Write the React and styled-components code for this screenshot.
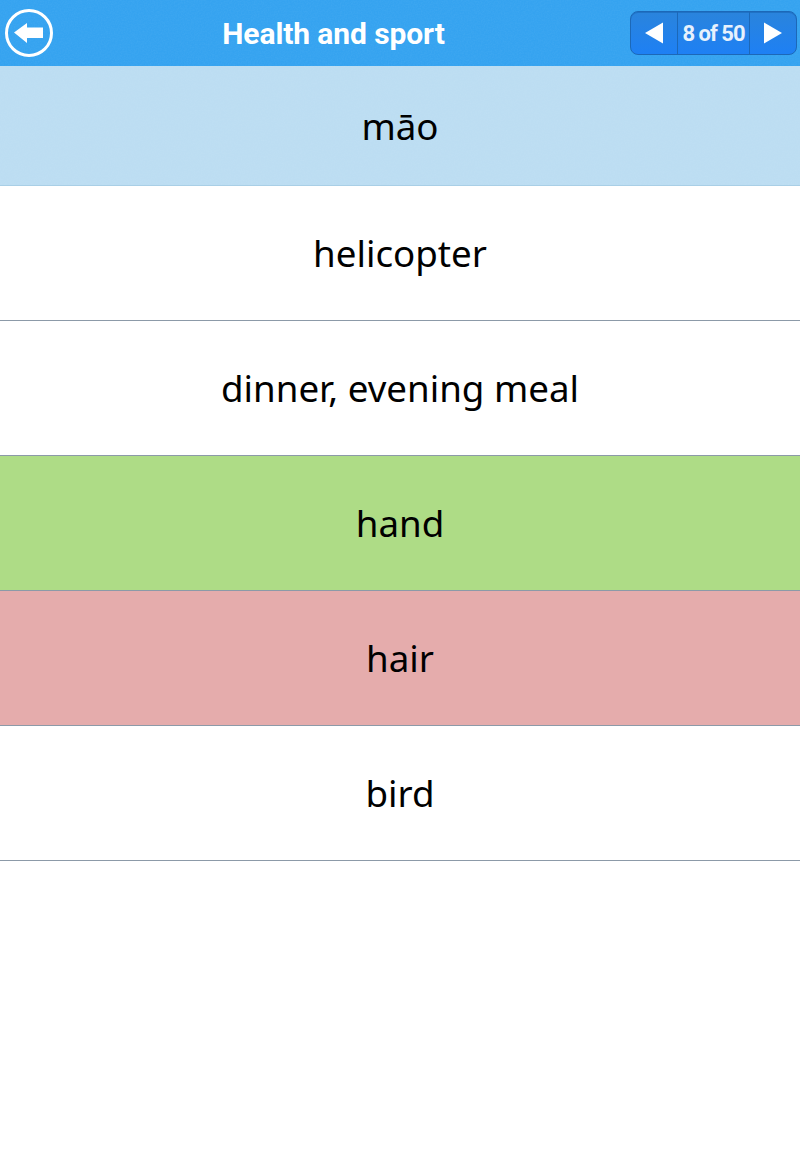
import React from 'react';
import styled, { createGlobalStyle } from 'styled-components';

const rows = [
  { text: 'helicopter', bg: '#ffffff' },
  { text: 'dinner, evening meal', bg: '#ffffff' },
  { text: 'hand', bg: '#aedc86' },
  { text: 'hair', bg: '#e5acac' },
  { text: 'bird', bg: '#ffffff' },
];

function Grain() {
  return (
    <GrainLayer aria-hidden="true">
      <filter id="grain">
        <feTurbulence type="fractalNoise" baseFrequency="0.7" numOctaves="2" />
        <feColorMatrix values="0 0 0 0 1  0 0 0 0 1  0 0 0 0 1  0.5 0 0 0 -0.15" />
      </filter>
      <rect width="100%" height="100%" filter="url(#grain)" opacity="0.14" />
    </GrainLayer>
  );
}

function App() {
  return (
    <>
      <GlobalStyle />
      <Page>
        <Header>
          <Grain />
          <BackButton aria-label="Back">
            <svg width="50" height="50" viewBox="0 0 50 50">
              <circle cx="25" cy="25" r="22.5" fill="none" stroke="#fff" strokeWidth="3" />
              <path d="M10 24.5 L23 15 V19.5 H39 V30 H23 V35 Z" fill="#fff" />
            </svg>
          </BackButton>
          <Title>Health and sport</Title>
          <Pager>
            <PagerArrow>
              <svg width="20" height="22" viewBox="0 0 20 22">
                <path d="M1 11 L19 0.5 V21.5 Z" fill="#fff" />
              </svg>
            </PagerArrow>
            <PagerCount>8 of 50</PagerCount>
            <PagerArrow>
              <svg width="20" height="22" viewBox="0 0 20 22">
                <path d="M19 11 L1 0.5 V21.5 Z" fill="#fff" />
              </svg>
            </PagerArrow>
          </Pager>
        </Header>
        <Question>
          <Grain />
          <RowText>māo</RowText>
        </Question>
        {rows.map((row) => (
          <Answer key={row.text} $bg={row.bg}>
            <RowText>{row.text}</RowText>
          </Answer>
        ))}
      </Page>
    </>
  );
}

export default App;

const GlobalStyle = createGlobalStyle`
  html, body {
    margin: 0;
    padding: 0;
    background: #fff;
  }
`;

const Page = styled.div`
  width: 800px;
  height: 1167px;
  overflow: hidden;
  background: #fff;
  font-family: 'Noto Sans', 'Open Sans', sans-serif;
`;

const GrainLayer = styled.svg`
  position: absolute;
  inset: 0;
  width: 100%;
  height: 100%;
  pointer-events: none;
`;

const Header = styled.header`
  position: relative;
  box-sizing: border-box;
  height: 66px;
  display: flex;
  align-items: center;
  justify-content: space-between;
  padding: 0 3px 0 4px;
  background: #35a3f0;
`;

const BackButton = styled.div`
  position: relative;
  width: 50px;
  height: 50px;
  svg {
    display: block;
  }
`;

const Title = styled.h1`
  position: absolute;
  left: 0;
  width: 667px;
  margin: 0;
  text-align: center;
  font-family: Roboto, 'Liberation Sans', sans-serif;
  font-size: 30px;
  font-weight: 700;
  letter-spacing: -0.1px;
  color: #fff;
`;

const Pager = styled.div`
  position: relative;
  box-sizing: border-box;
  width: 167px;
  height: 44px;
  display: flex;
  border: 1px solid #1c68b8;
  border-radius: 8px;
  background: linear-gradient(#2a84dc, #1e80f4);
  box-shadow: inset 0 1px 0 #1f72c6;
`;

const PagerArrow = styled.div`
  width: 46px;
  display: flex;
  align-items: center;
  justify-content: center;
`;

const PagerCount = styled.div`
  flex: 1;
  display: flex;
  align-items: center;
  justify-content: center;
  border-left: 1px solid #1c68b8;
  border-right: 1px solid #1c68b8;
  font-family: Roboto, 'Liberation Sans', sans-serif;
  font-size: 22px;
  font-weight: 700;
  letter-spacing: -1px;
  color: #e6f1fd;
`;

const RowText = styled.span`
  position: relative;
  color: #000;
  font-size: 36.7px;
`;

const Question = styled.div`
  position: relative;
  box-sizing: border-box;
  height: 120px;
  display: flex;
  align-items: center;
  justify-content: center;
  border-bottom: 1px solid #a9cfe6;
  background: #bcddf2;
`;

const Answer = styled.div`
  box-sizing: border-box;
  height: 135px;
  display: flex;
  align-items: center;
  justify-content: center;
  border-bottom: 1px solid #8c9aa8;
  background: ${(p) => p.$bg};
`;
